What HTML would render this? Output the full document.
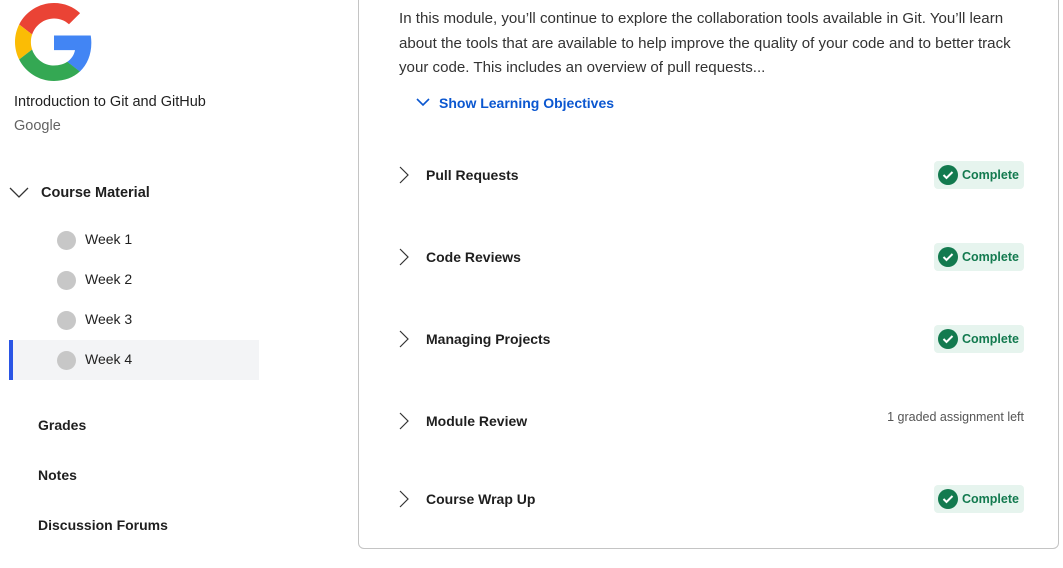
<!DOCTYPE html>
<html><head><style>
body{margin:0;width:1063px;height:568px;background:#fff;font-family:"Liberation Sans",sans-serif;color:#1f1f1f;position:relative;overflow:hidden}
.a{position:absolute}
.wk{position:absolute;left:57px;font-size:14px;color:#1f1f1f}
.wk i{display:inline-block;width:19px;height:19px;border-radius:50%;background:#c7c7c7;vertical-align:middle;margin-right:9px}
.nav{position:absolute;left:38px;font-size:14px;font-weight:bold}
.row{position:absolute;left:398px;width:626px;height:28px}
.row .t{position:absolute;left:28px;top:6px;font-size:14px;font-weight:bold}
.row svg.c{position:absolute;left:0;top:5px}
.badge{position:absolute;right:0;top:0;width:90px;height:28px;background:#e6f4ee;border-radius:4px;color:#137a4f;font-weight:bold;font-size:12.5px;line-height:28px}
.badge b{position:absolute;left:4px;top:4px;width:20px;height:20px;border-radius:50%;background:#137a4f}
.badge span{position:absolute;left:28px}
</style></head><body>
<svg class="a" style="left:15px;top:3px" width="78" height="78" viewBox="0 0 48 48">
<path fill="#EA4335" d="M24 9.5c3.54 0 6.71 1.22 9.21 3.6l6.85-6.85C35.9 2.38 30.47 0 24 0 14.62 0 6.51 5.38 2.56 13.22l7.98 6.19C12.43 13.72 17.74 9.5 24 9.5z"/>
<path fill="#4285F4" d="M46.98 24.55c0-1.57-.15-3.09-.38-4.55H24v9.02h12.94c-.58 2.96-2.26 5.48-4.78 7.18l7.73 6c4.51-4.18 7.09-10.36 7.09-17.65z"/>
<path fill="#FBBC05" d="M10.53 28.59c-.48-1.45-.76-2.99-.76-4.59s.27-3.14.76-4.59l-7.98-6.19C.92 16.46 0 20.12 0 24c0 3.88.92 7.54 2.56 10.78l7.97-6.19z"/>
<path fill="#34A853" d="M24 48c6.48 0 11.93-2.13 15.89-5.81l-7.73-6c-2.15 1.45-4.92 2.3-8.16 2.3-6.26 0-11.57-4.22-13.47-9.91l-7.98 6.19C6.51 42.62 14.62 48 24 48z"/>
</svg>
<div class="a" style="left:14px;top:94px;font-size:14.5px">Introduction to Git and GitHub</div>
<div class="a" style="left:14px;top:118px;font-size:14.5px;color:#636363">Google</div>
<svg class="a" style="left:9px;top:187px" width="20" height="12"><path d="M1 1l9 9 9-9" fill="none" stroke="#333" stroke-width="1.3"/></svg>
<div class="a" style="left:41px;top:185px;font-size:14.5px;font-weight:bold">Course Material</div>
<div class="a" style="left:9px;top:340px;width:250px;height:40px;background:#f3f4f6"></div>
<div class="a" style="left:9px;top:340px;width:4px;height:40px;background:#2a55e5"></div>
<div class="wk" style="top:231px"><i></i>Week 1</div>
<div class="wk" style="top:271px"><i></i>Week 2</div>
<div class="wk" style="top:311px"><i></i>Week 3</div>
<div class="wk" style="top:351px"><i></i>Week 4</div>
<div class="nav" style="top:417px">Grades</div>
<div class="nav" style="top:467px">Notes</div>
<div class="nav" style="top:517px">Discussion Forums</div>
<div class="a" style="left:358px;top:-10px;width:699px;height:557px;border:1px solid #c4c4c4;border-radius:6px"></div>
<div class="a" style="left:399px;top:7px;width:640px;font-size:15.1px;line-height:24.5px;color:#333">In this module, you’ll continue to explore the collaboration tools available in Git. You’ll learn about the tools that are available to help improve the quality of your code and to better track your code. This includes an overview of pull requests...</div>
<svg class="a" style="left:416px;top:98px" width="14" height="9"><path d="M1 1l6 6 6-6" fill="none" stroke="#0b57d0" stroke-width="1.6"/></svg>
<div class="a" style="left:439px;top:95px;font-size:14px;font-weight:bold;color:#0b57d0">Show Learning Objectives</div>
<div class="row" style="top:161px"><svg class="c" width="12" height="18"><path d="M2 1l8 8-8 8" fill="none" stroke="#333" stroke-width="1.2"/></svg><div class="t">Pull Requests</div><div class="badge"><b><svg width="20" height="20"><path d="M5.5 10l3 3 6-6" fill="none" stroke="#fff" stroke-width="2"/></svg></b><span>Complete</span></div></div>
<div class="row" style="top:243px"><svg class="c" width="12" height="18"><path d="M2 1l8 8-8 8" fill="none" stroke="#333" stroke-width="1.2"/></svg><div class="t">Code Reviews</div><div class="badge"><b><svg width="20" height="20"><path d="M5.5 10l3 3 6-6" fill="none" stroke="#fff" stroke-width="2"/></svg></b><span>Complete</span></div></div>
<div class="row" style="top:325px"><svg class="c" width="12" height="18"><path d="M2 1l8 8-8 8" fill="none" stroke="#333" stroke-width="1.2"/></svg><div class="t">Managing Projects</div><div class="badge"><b><svg width="20" height="20"><path d="M5.5 10l3 3 6-6" fill="none" stroke="#fff" stroke-width="2"/></svg></b><span>Complete</span></div></div>
<div class="row" style="top:407px"><svg class="c" width="12" height="18"><path d="M2 1l8 8-8 8" fill="none" stroke="#333" stroke-width="1.2"/></svg><div class="t">Module Review</div><div class="a" style="right:0;top:3px;font-size:12.5px;color:#555">1 graded assignment left</div></div>
<div class="row" style="top:485px"><svg class="c" width="12" height="18"><path d="M2 1l8 8-8 8" fill="none" stroke="#333" stroke-width="1.2"/></svg><div class="t">Course Wrap Up</div><div class="badge"><b><svg width="20" height="20"><path d="M5.5 10l3 3 6-6" fill="none" stroke="#fff" stroke-width="2"/></svg></b><span>Complete</span></div></div>
</body></html>
